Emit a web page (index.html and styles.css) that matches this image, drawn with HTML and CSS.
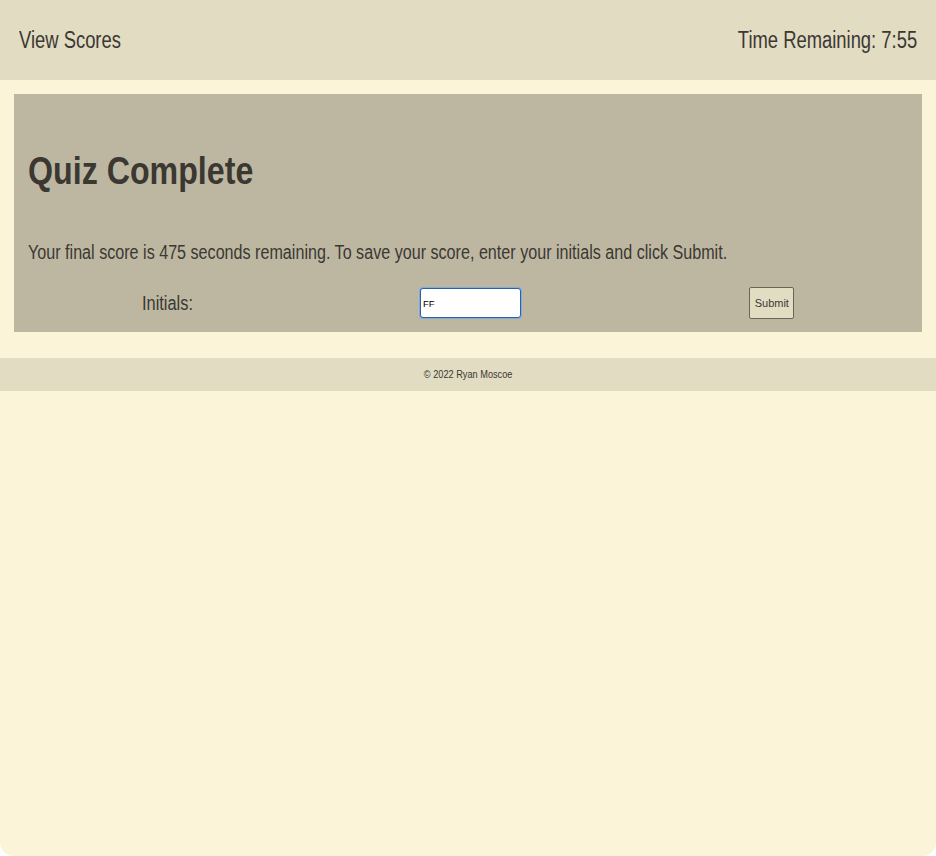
FILE: index.html
```html
<!DOCTYPE html>
<html lang="en">
<head>
<meta charset="utf-8">
<title>Quiz</title>
<link rel="stylesheet" href="styles.css">
</head>
<body>
<div class="page">
  <header class="topbar">
    <a class="scores-link"><span class="narrow">View Scores</span></a>
    <div class="timer"><span class="narrow right">Time Remaining: 7:55</span></div>
  </header>
  <main class="card">
    <h1 class="title">Quiz Complete</h1>
    <p class="message">Your final score is 475 seconds remaining. To save your score, enter your initials and click Submit.</p>
    <form class="save-row">
      <label class="label" for="initials"><span class="narrow">Initials:</span></label>
      <input class="initials" id="initials" type="text" value="FF">
      <button class="submit" type="button">Submit</button>
    </form>
  </main>
  <footer class="footer"><span class="foot-text">© 2022 Ryan Moscoe</span></footer>
</div>
</body>
</html>
```

FILE: styles.css
```css
html {
  background: #ffffff;
}
body {
  margin: 0;
  font-family: "Liberation Sans", Arial, sans-serif;
  color: #3b3832;
}
.page {
  min-height: 856px;
  box-sizing: border-box;
  background: #fcf4d9;
  border-radius: 0 0 14px 14px;
  overflow: hidden;
}
.narrow {
  display: inline-block;
  white-space: nowrap;
  transform: scaleX(0.8);
  transform-origin: left center;
}
.narrow.right {
  transform-origin: right center;
}
.topbar {
  height: 80px;
  background: #e2dcc3;
  display: flex;
  align-items: center;
  justify-content: space-between;
  padding: 0 19px;
  font-size: 23px;
}
.scores-link {
  color: #3b3832;
  cursor: pointer;
}
.card {
  margin: 14px 14px 0;
  background: #bdb7a2;
  padding: 14px 14px 13px;
}
.title {
  margin: 41px 0 47px;
  font-size: 38.5px;
  font-weight: bold;
  line-height: 44px;
  white-space: nowrap;
  transform: scaleX(0.836);
  transform-origin: left center;
}
.message {
  margin: 0 0 23px;
  font-size: 19.5px;
  line-height: 24px;
  white-space: nowrap;
  transform: scaleX(0.827);
  transform-origin: left center;
}
.save-row {
  display: flex;
  align-items: center;
  justify-content: space-around;
  margin: 0;
}
.label {
  width: 50px;
  font-size: 19.5px;
}
.label .narrow {
  transform: scaleX(0.84);
}
.initials {
  width: 101px;
  height: 30px;
  margin: 0 1px;
  box-sizing: border-box;
  border: 1px solid #2d5fa6;
  box-shadow: 0 0 0 1px #86a9d6;
  border-radius: 3px;
  background: #fff;
  font-family: "Liberation Sans", sans-serif;
  font-size: 9.5px;
  padding: 0 2px;
  color: #000;
  outline: none;
}
.submit {
  width: 45px;
  height: 32px;
  box-sizing: border-box;
  background: #e2dcc3;
  border: 1px solid #6b6555;
  border-radius: 2px;
  font-family: "Liberation Sans", sans-serif;
  font-size: 11px;
  color: #3b3832;
  padding: 0;
}
.footer {
  margin-top: 26px;
  height: 33px;
  background: #e2dcc3;
  display: flex;
  align-items: center;
  justify-content: center;
  font-size: 10px;
}
.foot-text {
  display: inline-block;
  transform: scaleX(0.92);
}
```
